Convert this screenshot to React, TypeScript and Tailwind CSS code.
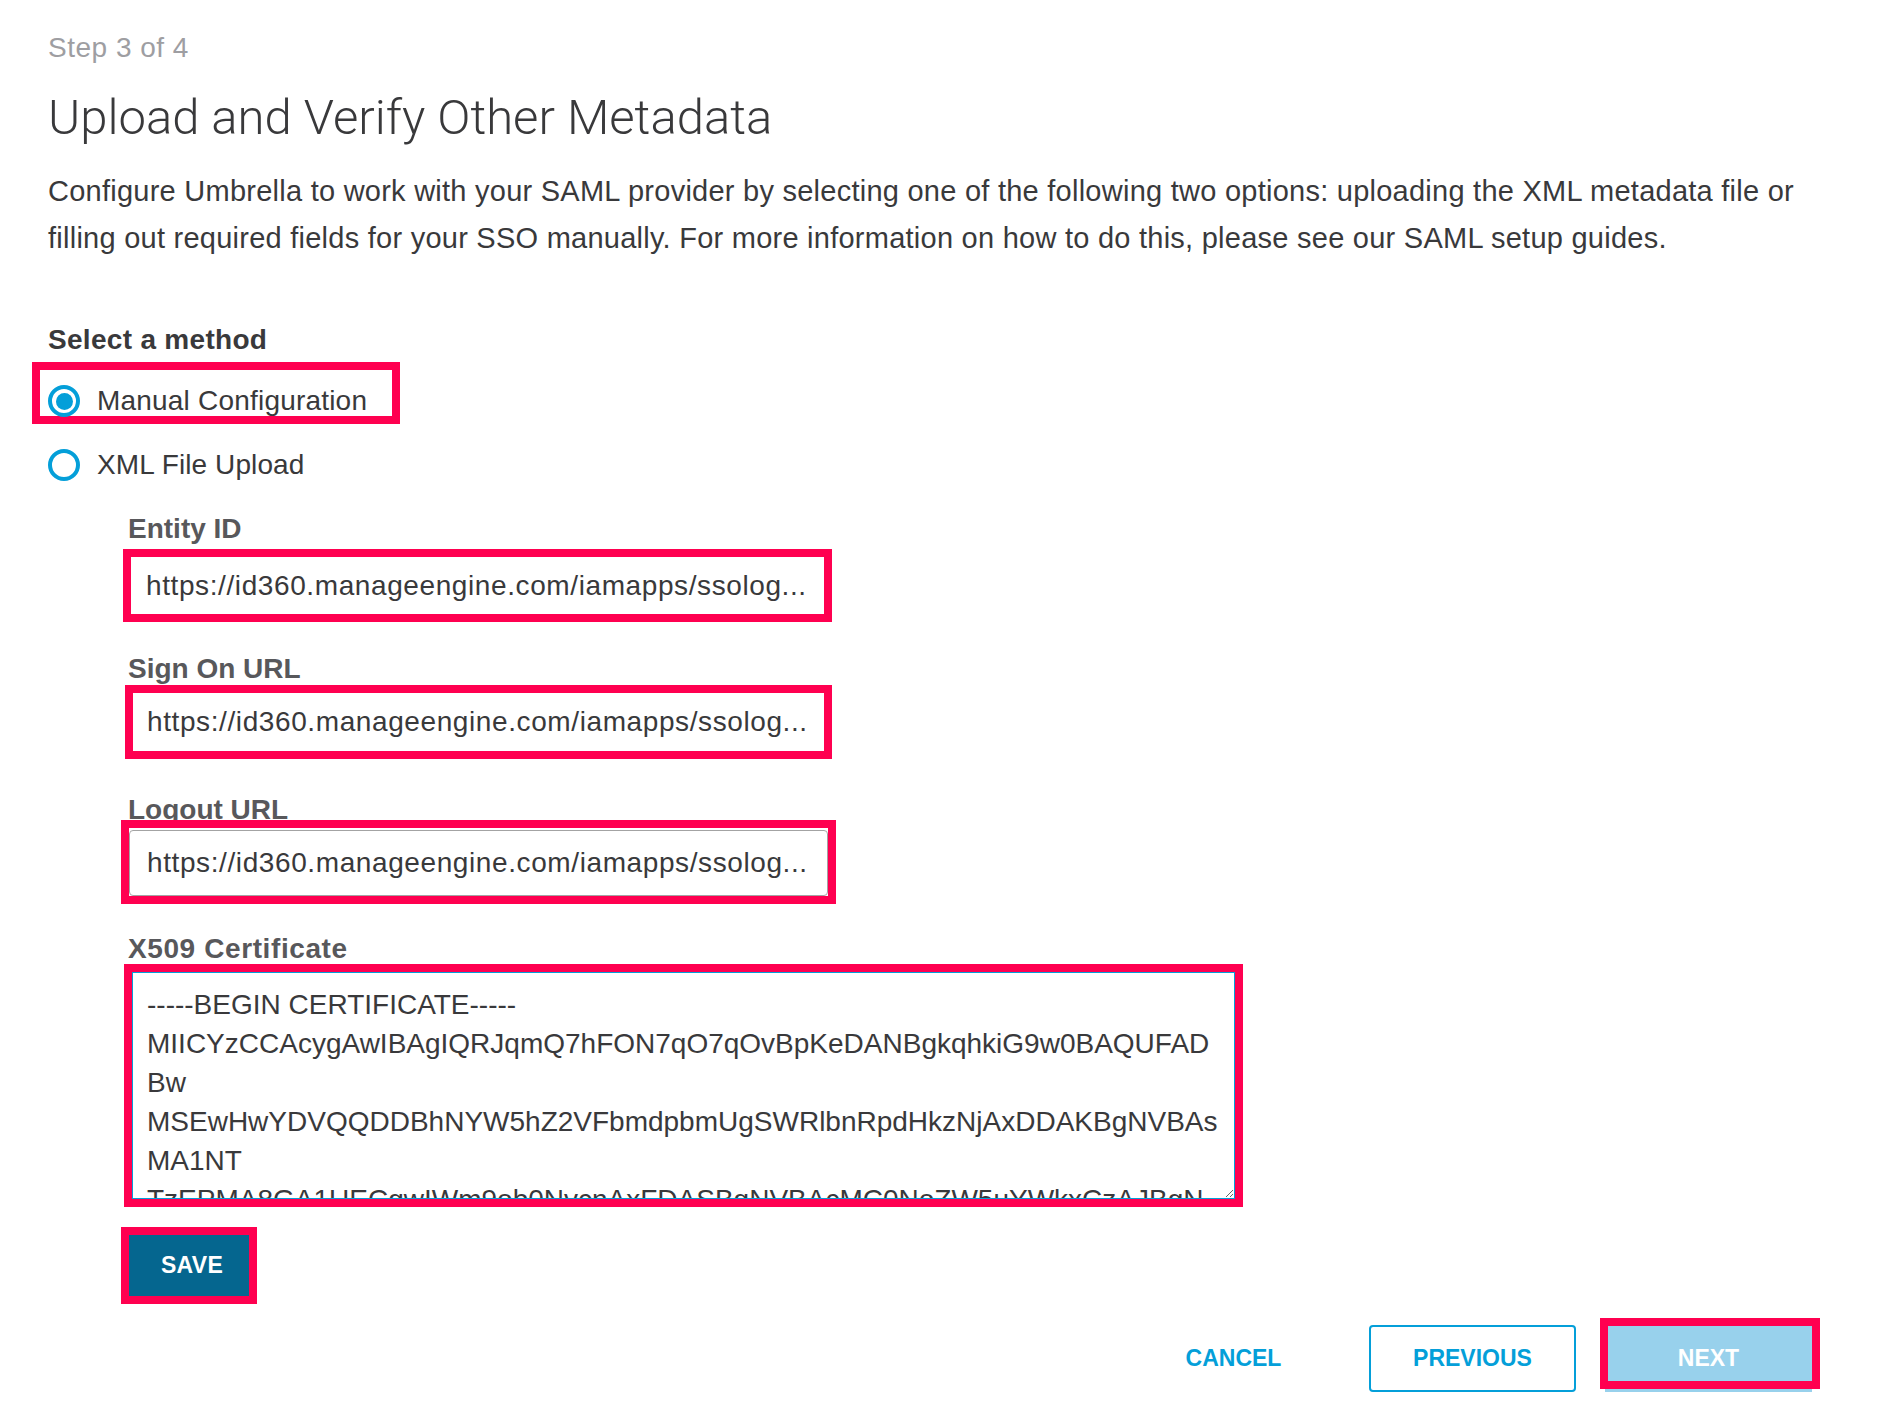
import { useState } from 'react';

const CERT = [
  '-----BEGIN CERTIFICATE-----',
  'MIICYzCCAcygAwIBAgIQRJqmQ7hFON7qO7qOvBpKeDANBgkqhkiG9w0BAQUFAD',
  'Bw',
  'MSEwHwYDVQQDDBhNYW5hZ2VFbmdpbmUgSWRlbnRpdHkzNjAxDDAKBgNVBAs',
  'MA1NT',
  'TzEPMA8GA1UECgwIWm9ob0NvcnAxFDASBgNVBAcMC0NoZW5uYWkxCzAJBgN',
  'VBAYTAklOMB4XDTIzMDEwMTAwMDAwMFoXDTMzMDEwMTAwMDAwMFow',
].join('\n');

const URL_VALUE = 'https://id360.manageengine.com/iamapps/ssolog...';

function Radio({ checked }: { checked: boolean }) {
  return (
    <span className="w-[32px] h-[32px] shrink-0 rounded-full border-[4px] border-[#049fd9] flex items-center justify-center">
      {checked && <span className="w-[17px] h-[17px] rounded-full bg-[#049fd9]"></span>}
    </span>
  );
}

export default function App() {
  const [method, setMethod] = useState('manual');

  return (
    <div className="min-h-[1416px] bg-white pt-[32px] pl-[48px] pr-[80px] font-['Liberation_Sans',Arial,sans-serif] text-[#39393b]">
      {/* Header */}
      <p className="text-[28px] leading-[32px] tracking-[0.5px] text-[#9e9ea2]">Step 3 of 4</p>
      <h1 className="mt-[24px] font-['Roboto',sans-serif] font-light text-[49px] leading-[60px] text-[#39393b]">
        Upload and Verify Other Metadata
      </h1>
      <p className="mt-[20px] text-[29px] leading-[47px] tracking-[0.25px]">
        Configure Umbrella to work with your SAML provider by selecting one of the following two options: uploading the XML metadata file or filling out required fields for your SSO manually. For more information on how to do this, please see our SAML setup guides.
      </p>

      {/* Method */}
      <p className="mt-[62px] text-[28px] leading-[32px] font-bold tracking-[0.3px]">Select a method</p>
      <div className="mt-[6px] -ml-[16px] w-[368px] h-[62px] border-[8px] border-[#ff0050] pl-[8px] pt-[15px]">
        <button type="button" className="flex items-center gap-[17px]" onClick={() => setMethod('manual')}>
          <Radio checked={method === 'manual'} />
          <span className="text-[28px] leading-[32px] tracking-[0.2px]">Manual Configuration</span>
        </button>
      </div>
      <button type="button" className="mt-[25px] flex items-center gap-[17px]" onClick={() => setMethod('xml')}>
        <Radio checked={method === 'xml'} />
        <span className="text-[28px] leading-[32px] tracking-[0.1px]">XML File Upload</span>
      </button>

      {/* Fields */}
      <div className="mt-[32px] flex flex-col items-start">
        <label className="ml-[80px] text-[28px] leading-[32px] font-bold text-[#58585b]">Entity ID</label>
        <div className="mt-[4px] ml-[75px] w-[709px] border-[8px] border-[#ff0050]">
          <input
            readOnly
            value={URL_VALUE}
            className="w-full h-[57px] pl-[15px] pr-[10px] text-[28px] tracking-[0.6px] text-[#39393b] bg-white outline-none"
          />
        </div>

        <label className="mt-[31px] ml-[80px] text-[28px] leading-[32px] font-bold text-[#58585b]">Sign On URL</label>
        <div className="ml-[77px] w-[707px] h-[74px] border-[8px] border-[#ff0050]">
          <input
            readOnly
            value={URL_VALUE}
            className="w-full h-full pl-[14px] pr-[10px] text-[28px] tracking-[0.6px] text-[#39393b] bg-white outline-none"
          />
        </div>

        <label className="mt-[35px] ml-[80px] text-[28px] leading-[32px] font-bold text-[#58585b]">Logout URL</label>
        <div className="-mt-[6px] ml-[73px] w-[715px] border-[8px] border-[#ff0050] pt-[2px]">
          <input
            readOnly
            value={URL_VALUE}
            className="w-full h-[66px] pl-[17px] pr-[10px] text-[28px] tracking-[0.6px] text-[#39393b] bg-white border border-[#a3a3a3] rounded-[4px] outline-none"
          />
        </div>

        <label className="mt-[29px] ml-[80px] text-[28px] leading-[32px] font-bold tracking-[0.6px] text-[#58585b]">X509 Certificate</label>
        <div className="-mt-[1px] ml-[76px] w-[1119px] border-[8px] border-[#ff0050]">
          <textarea
            readOnly
            wrap="off"
            value={CERT}
            className="block w-full h-[227px] pt-[12px] pl-[14px] text-[28px] leading-[39px] text-[#39393b] bg-white border border-[#049fd9] outline-none overflow-hidden"
          />
        </div>

        <div className="mt-[20px] ml-[73px] border-[8px] border-[#ff0050]">
          <button type="button" className="w-[120px] h-[61px] pl-[6px] bg-[#05668f] text-white text-[23px] font-bold tracking-[0.3px] flex items-center justify-center">
            SAVE
          </button>
        </div>
      </div>

      {/* Footer buttons */}
      <div className="mt-[21px] flex justify-end items-center">
        <button type="button" className="w-[207px] h-[67px] mr-[32px] text-[23px] font-bold text-[#049fd9]">
          CANCEL
        </button>
        <button type="button" className="w-[207px] h-[67px] mr-[29px] rounded-[4px] border-2 border-[#049fd9] text-[23px] font-bold text-[#049fd9]">
          PREVIOUS
        </button>
        <div className="relative mr-[8px]">
          <button type="button" className="w-[207px] h-[67px] bg-[#98d1ec] text-[23px] font-bold text-white">
            NEXT
          </button>
          <span className="absolute -left-[5px] -top-[7px] w-[220px] h-[71px] border-[8px] border-[#ff0050]"></span>
        </div>
      </div>
    </div>
  );
}
